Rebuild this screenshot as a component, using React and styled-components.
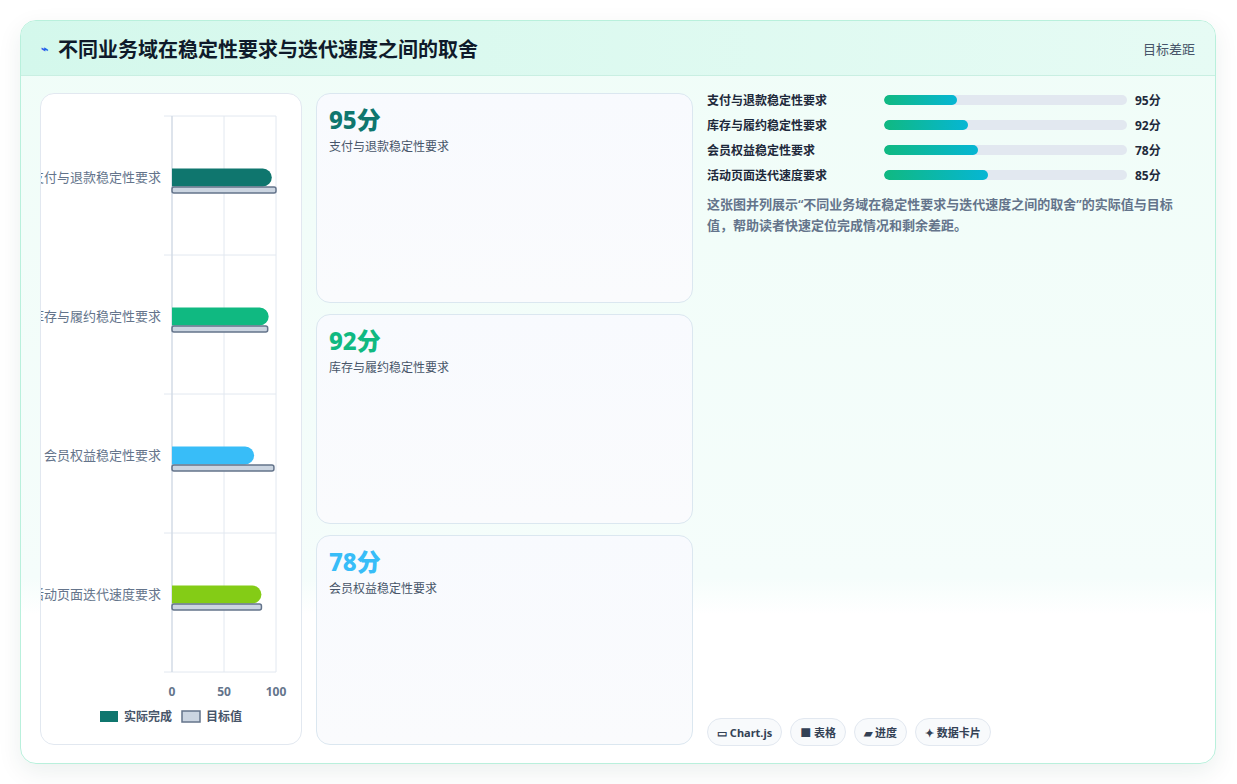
import React from "react";
import styled, { createGlobalStyle } from "styled-components";

const G = createGlobalStyle`
  body{margin:0;background:#fff;font-family:"Noto Sans","Noto Sans CJK SC",sans-serif;}
`;
const Page = styled.div`padding:20px 21px 20px 20px;`;
const Card = styled.div`
  height:744px;box-sizing:border-box;border:1px solid #b9f0dc;border-radius:16px;overflow:hidden;
  background:linear-gradient(180deg,#f0fdf8 0%,#f5fdfb 75%,#fff 80%,#fff 100%);
  box-shadow:0 8px 24px rgba(15,60,50,.08);display:flex;flex-direction:column;
`;
const Header = styled.div`
  height:55px;box-sizing:border-box;display:flex;align-items:center;justify-content:space-between;
  padding:0 20px;background:linear-gradient(90deg,#d4f8ec,#e6fbf4);border-bottom:1px solid #c9efe2;
`;
const Title = styled.h1`margin:0;font-size:20px;font-weight:700;color:#0f1a2a;display:flex;align-items:center;gap:10px;`;
const Bolt = styled.span`color:#2563eb;font-size:12px;`;
const Tag = styled.span`font-size:13px;color:#475569;`;
const Body = styled.div`flex:1;display:grid;grid-template-columns:262px 377px 1fr;gap:14px;padding:17px 19px 18px 19px;min-height:0;`;
const ChartBox = styled.div`background:#fff;border:1px solid #e2e8f0;border-radius:14px;position:relative;overflow:hidden;`;
const Mid = styled.div`display:grid;grid-template-rows:repeat(3,1fr);gap:11px;`;
const Stat = styled.div`background:linear-gradient(180deg,#f8fafe,#fafbfd);border:1px solid #dbe7f0;border-radius:14px;padding:10px 12px;`;
const Big = styled.div`font-size:24px;font-weight:800;color:${p=>p.c};line-height:32px;`;
const Sub = styled.div`font-size:12px;color:#475569;margin-top:1px;`;
const Right = styled.div`display:flex;flex-direction:column;margin-top:-6px;`;
const Row = styled.div`display:grid;grid-template-columns:177px 243px 1fr;align-items:center;height:25px;font-size:12px;font-weight:700;color:#1e293b;`;
const Track = styled.div`height:10px;border-radius:5px;background:#e2e8f0;overflow:hidden;`;
const Fill = styled.div`height:100%;border-radius:5px;background:linear-gradient(90deg,#10b981,#06b6d4);`;
const Val = styled.span`padding-left:8px;`;
const Desc = styled.p`margin:7px 0 0;font-size:13px;font-weight:600;line-height:21px;color:#64748b;width:480px;`;
const Chips = styled.div`margin-top:auto;display:flex;gap:8px;margin-bottom:-1px;`;
const Chip = styled.span`height:26px;padding:0 9px;border:1px solid #e2e8f0;border-radius:14px;background:#f8fafc;font-size:11px;font-weight:700;color:#334155;display:flex;align-items:center;gap:4px;`;

const cats=["支付与退款稳定性要求","库存与履约稳定性要求","会员权益稳定性要求","活动页面迭代速度要求"];
const act=[95,92,78,85],tgt=[100,92,98,86],cols=["#0f766e","#10b981","#38bdf8","#84cc16"];
const rows=[["支付与退款稳定性要求",73,"95分"],["库存与履约稳定性要求",84,"92分"],["会员权益稳定性要求",94,"78分"],["活动页面迭代速度要求",104,"85分"]];

function Chart(){
  const x0=131,w=104,y0=22,ch=139;
  return <svg width="262" height="653" style={{display:"block"}}>
    {[0,50,100].map(v=><line key={v} x1={x0+v*w/100} x2={x0+v*w/100} y1={y0} y2={y0+4*ch} stroke="#e2e8f0"/>)}
    {[0,1,2,3,4].map(i=><line key={i} x1={x0-8} x2={x0+w} y1={y0+i*ch} y2={y0+i*ch} stroke="#e2e8f0"/>)}
    <line x1={x0} x2={x0} y1={y0} y2={y0+4*ch} stroke="#cbd5e1"/>
    {cats.map((c,i)=>{const cy=y0+i*ch+ch/2;return <g key={i}>
      <text x={x0-11} y={cy-4} textAnchor="end" fontSize="13" fill="#64748b">{c}</text>
      <path d={`M${x0} ${cy-17}h${act[i]*w/100-8}a9 9 0 0 1 0 18h-${act[i]*w/100-8}z`} fill={cols[i]}/>
      <rect x={x0} y={cy+1.5} width={tgt[i]*w/100} height="6" rx="2" fill="#cbd5e1" stroke="#64748b" strokeWidth="1.5"/>
    </g>})}
    {[0,50,100].map(v=><text key={v} x={x0+v*w/100} y={y0+4*ch+24} textAnchor="middle" fontSize="12" fontWeight="700" fill="#64748b">{v}</text>)}
    <rect x="59" y="617" width="18" height="11" fill="#0f766e"/>
    <text x="83" y="627" fontSize="12" fontWeight="700" fill="#475569">实际完成</text>
    <rect x="141" y="617" width="18" height="11" fill="#cbd5e1" stroke="#64748b" strokeWidth="1.5"/>
    <text x="165" y="627" fontSize="12" fontWeight="700" fill="#475569">目标值</text>
  </svg>;
}

export default function App(){
  return <Page><G/><Card>
    <Header><Title><Bolt>⌁</Bolt>不同业务域在稳定性要求与迭代速度之间的取舍</Title><Tag>目标差距</Tag></Header>
    <Body>
      <ChartBox><Chart/></ChartBox>
      <Mid>
        <Stat><Big c="#0f766e">95分</Big><Sub>支付与退款稳定性要求</Sub></Stat>
        <Stat><Big c="#10b981">92分</Big><Sub>库存与履约稳定性要求</Sub></Stat>
        <Stat><Big c="#38bdf8">78分</Big><Sub>会员权益稳定性要求</Sub></Stat>
      </Mid>
      <Right>
        {rows.map(r=><Row key={r[0]}><span>{r[0]}</span><Track><Fill style={{width:r[1]}}/></Track><Val>{r[2]}</Val></Row>)}
        <Desc>这张图并列展示“不同业务域在稳定性要求与迭代速度之间的取舍”的实际值与目标值，帮助读者快速定位完成情况和剩余差距。</Desc>
        <Chips><Chip>▭ Chart.js</Chip><Chip>■ 表格</Chip><Chip>▰ 进度</Chip><Chip>✦ 数据卡片</Chip></Chips>
      </Right>
    </Body>
  </Card></Page>;
}
